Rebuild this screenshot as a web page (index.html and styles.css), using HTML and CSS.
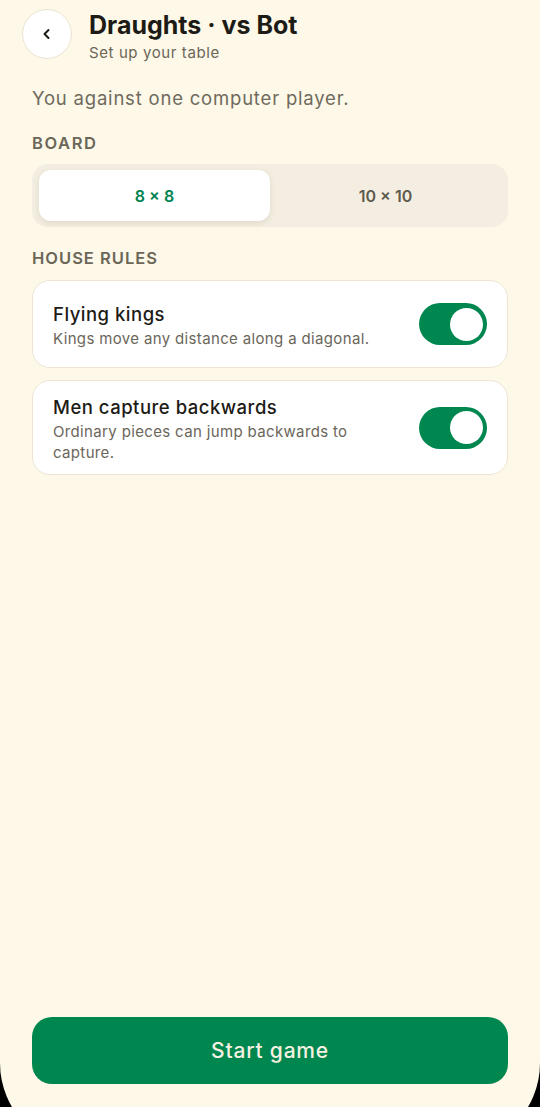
FILE: index.html
```html
<!DOCTYPE html>
<html>
<head>
<meta charset="utf-8">
<link rel="stylesheet" href="styles.css">
</head>
<body>
<div class="screen">
  <header class="header">
    <button class="back" aria-label="Back">
      <svg width="14" height="14" viewBox="0 0 14 14"><path d="M8.5 3 L4.5 7 L8.5 11" fill="none" stroke="#1d1b16" stroke-width="2" stroke-linecap="round" stroke-linejoin="round"/></svg>
    </button>
    <div class="titles">
      <h1 class="title">Draughts · vs Bot</h1>
      <div class="subtitle">Set up your table</div>
    </div>
  </header>
  <p class="intro">You against one computer player.</p>
  <div class="label label-board">BOARD</div>
  <div class="segment">
    <div class="seg-item seg-active">8 × 8</div>
    <div class="seg-item">10 × 10</div>
  </div>
  <div class="label label-rules">HOUSE RULES</div>
  <div class="cards">
    <div class="card">
      <div class="card-text">
        <div class="card-title">Flying kings</div>
        <div class="card-desc">Kings move any distance along a diagonal.</div>
      </div>
      <div class="toggle"><div class="knob"></div></div>
    </div>
    <div class="card card-tall">
      <div class="card-text">
        <div class="card-title">Men capture backwards</div>
        <div class="card-desc">Ordinary pieces can jump backwards to capture.</div>
      </div>
      <div class="toggle"><div class="knob"></div></div>
    </div>
  </div>
  <div class="spacer"></div>
  <button class="start">Start game</button>
</div>
</body>
</html>
```
FILE: styles.css
```css
html, body {
  margin: 0;
  padding: 0;
  height: 1107px;
  overflow: hidden;
  background: #000;
}
.screen {
  box-sizing: border-box;
  height: 1150px;
  background: #fdf8e7;
  border-radius: 0 0 87px 87px;
  padding: 9px 32px 66px 32px;
  display: flex;
  flex-direction: column;
  font-family: "Inter", "Noto Sans", sans-serif;
  color: #1d1b16;
}
.header {
  display: flex;
  align-items: flex-start;
  gap: 17px;
  margin-left: -10px;
}
.back {
  width: 50px;
  height: 50px;
  border-radius: 50%;
  background: #fff;
  border: 1px solid #ece4d2;
  display: flex;
  align-items: center;
  justify-content: center;
  padding: 0;
  flex: none;
}
.titles {
  display: flex;
  flex-direction: column;
  margin-top: 1px;
}
.title {
  margin: 0;
  font-size: 25px;
  font-weight: 700;
  letter-spacing: 0;
  line-height: 30px;
}
.subtitle {
  margin-top: 4px;
  font-size: 15px;
  color: #6b665a;
  line-height: 18px;
  letter-spacing: 0.6px;
}
.intro {
  margin: 24px 0 0 0;
  font-size: 18.5px;
  color: #6f6a5e;
  line-height: 24px;
  letter-spacing: 0.8px;
}
.label {
  font-size: 16.5px;
  font-weight: 600;
  color: #6b6658;
  line-height: 20px;
  letter-spacing: 1px;
}
.label-board {
  margin-top: 23px;
  letter-spacing: 1.6px;
}
.label-rules {
  margin-top: 21px;
}
.segment {
  margin-top: 11px;
  height: 63px;
  box-sizing: border-box;
  background: #f3eee1;
  border-radius: 16px;
  padding: 6px 7px;
  display: grid;
  grid-template-columns: 1fr 1fr;
}
.seg-item {
  display: flex;
  align-items: center;
  justify-content: center;
  font-size: 16px;
  font-weight: 600;
  color: #5f5a4e;
  border-radius: 12px;
}
.seg-active {
  background: #fff;
  color: #00824f;
  box-shadow: 0 2px 6px rgba(120, 100, 60, 0.15);
}
.cards {
  margin-top: 12px;
  display: flex;
  flex-direction: column;
  gap: 12px;
}
.card {
  box-sizing: border-box;
  background: #fff;
  border: 1px solid #ece5d3;
  border-radius: 18px;
  height: 88px;
  padding: 4px 20px 0 20px;
  display: flex;
  align-items: center;
  gap: 20px;
}
.card-tall {
  height: 95px;
}
.card-text {
  flex: 1;
  display: flex;
  flex-direction: column;
  gap: 2px;
}
.card-title {
  font-size: 18.5px;
  font-weight: 500;
  line-height: 23px;
  letter-spacing: 0.5px;
}
.card-desc {
  font-size: 15px;
  color: #6b665a;
  line-height: 21px;
  letter-spacing: 0.35px;
  max-width: 330px;
}
.card-tall .card-desc {
  max-width: 320px;
}
.toggle {
  flex: none;
  width: 68px;
  height: 42px;
  margin-top: -4px;
  border-radius: 21px;
  background: #00864f;
  box-sizing: border-box;
  padding: 4.5px;
  display: flex;
  justify-content: flex-end;
}
.knob {
  width: 33px;
  height: 33px;
  border-radius: 50%;
  background: #fff;
}
.spacer {
  flex: 1;
}
.start {
  height: 67px;
  border: none;
  border-radius: 20px;
  background: #00864f;
  color: #f6f1e0;
  font-family: "Inter", "Noto Sans", sans-serif;
  font-size: 21px;
  font-weight: 500;
  letter-spacing: 0.8px;
  width: 100%;
}
```
